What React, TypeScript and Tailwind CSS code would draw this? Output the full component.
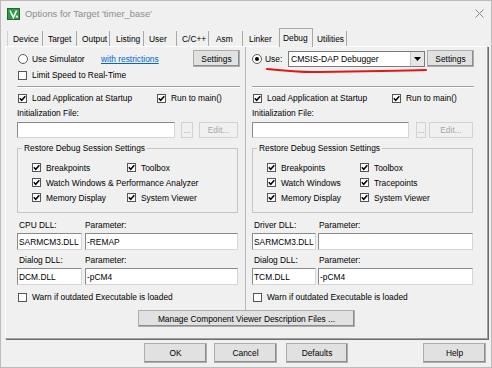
import clsx from "clsx";
import type { ReactNode } from "react";

const Check = ({ on = true }: { on?: boolean }) => (
  <span className="flex h-[9px] w-[9px] shrink-0 items-center justify-center border border-[#555] bg-white">
    {on && (
      <svg width="7" height="7" viewBox="0 0 7 7">
        <path d="M0.8 3.3 2.7 5.3 6.3 1.2" fill="none" stroke="#000" strokeWidth="1.5" />
      </svg>
    )}
  </span>
);

const Radio = ({ on = false }: { on?: boolean }) => (
  <span className="flex h-[10px] w-[10px] shrink-0 items-center justify-center rounded-full border border-[#5a5a5a] bg-white">
    {on && <span className="h-[4px] w-[4px] rounded-full bg-black" />}
  </span>
);

const CheckLabel = ({ label, on = true, className }: { label: string; on?: boolean; className?: string }) => (
  <div className={clsx("flex items-center gap-[5px] whitespace-nowrap", className)}>
    <Check on={on} />
    <span>{label}</span>
  </div>
);

const Btn = ({ children, className, disabled }: { children: ReactNode; className?: string; disabled?: boolean }) => (
  <div
    className={clsx(
      "flex shrink-0 items-center justify-center whitespace-nowrap border",
      disabled
        ? "border-[#d2d2d2] bg-[#f0f0f0] text-[#a6a6a6]"
        : "border-[#adadad] bg-[#e1e1e1] shadow-[inset_-1px_-1px_0_#8c8c8c]",
      className
    )}
  >
    {children}
  </div>
);

const Field = ({ value, className }: { value: string; className?: string }) => (
  <div
    className={clsx(
      "flex shrink-0 items-center overflow-hidden whitespace-nowrap border border-[#d6d6d6] border-t-[#8a8a8a] border-l-[#8a8a8a] bg-white px-[1px]",
      className
    )}
  >
    {value}
  </div>
);

type Side = {
  top: ReactNode;
  second: ReactNode;
  runW: string;
  initW: string;
  dots: string;
  edit: string;
  checks: string[][];
  firstCheckW: string;
  dll: string;
  dllLabelW: string;
  dllW: string;
  paramCls: string;
  dllVal: string;
  paramVal: string;
  dlgVal: string;
  dlgParam: string;
};

const Column = ({ s, className }: { s: Side; className: string }) => (
  <div className={clsx("flex flex-col pt-[3px]", className)}>
    <div className="flex h-[17px] items-center">{s.top}</div>
    <div className="flex h-[16px] items-center">{s.second}</div>
    <div className="mt-[3px] h-[2px] border-t border-b border-t-[#a0a0a0] border-b-white" />

    <div className="mt-[3px] flex h-[14px] items-center">
      <CheckLabel label="Load Application at Startup" className={clsx("ml-[1px]", s.runW)} />
      <CheckLabel label="Run to main()" />
    </div>
    <div className="mt-[1px] flex h-[14px] items-center">Initialization File:</div>
    <div className="mt-[2px] flex h-[16px] items-center">
      <Field value="" className={clsx("h-[16px]", s.initW)} />
      <Btn disabled className={clsx("h-[16px] border-[#bdbdbd] text-[#555]", s.dots)}>...</Btn>
      <Btn disabled className={clsx("h-[16px]", s.edit)}>Edit...</Btn>
    </div>

    <fieldset className="mt-[5px] h-[70px] w-[221px] border border-[#c6c6c6]">
      <legend className="ml-[4px] px-[2px] leading-[10px]">Restore Debug Session Settings</legend>
      <div className="flex flex-col pl-[14px] pt-[7px]">
        {s.checks.map((row) => (
          <div key={row[0]} className="flex h-[15px] items-center">
            <CheckLabel label={row[0]} className={row[1] ? s.firstCheckW : undefined} />
            {row[1] && <CheckLabel label={row[1]} />}
          </div>
        ))}
      </div>
    </fieldset>

    <div className="mt-[5px] flex h-[14px] items-center">
      <span className={clsx("ml-[2px]", s.dllLabelW)}>{s.dll}</span>
      <span>Parameter:</span>
    </div>
    <div className="mt-[1px] flex h-[17px]">
      <Field value={s.dllVal} className={s.dllW} />
      <Field value={s.paramVal} className={s.paramCls} />
    </div>
    <div className="mt-[3px] flex h-[14px] items-center">
      <span className={clsx("ml-[2px]", s.dllLabelW)}>Dialog DLL:</span>
      <span>Parameter:</span>
    </div>
    <div className="mt-[1px] flex h-[17px]">
      <Field value={s.dlgVal} className={s.dllW} />
      <Field value={s.dlgParam} className={s.paramCls} />
    </div>
    <div className="mt-[5px] flex h-[14px] items-center">
      <CheckLabel on={false} label="Warn if outdated Executable is loaded" className="ml-[1px]" />
    </div>
  </div>
);

const left: Side = {
  top: (
    <>
      <div className="ml-[1px] flex w-[83px] items-center gap-[4px] whitespace-nowrap">
        <Radio />
        <span>Use Simulator</span>
      </div>
      <span className="text-[#0066cc] underline">with restrictions</span>
      <Btn className="ml-auto h-[17px] w-[47px]">Settings</Btn>
    </>
  ),
  second: <CheckLabel on={false} label="Limit Speed to Real-Time" className="ml-[1px]" />,
  runW: "w-[139px]",
  initW: "w-[158px]",
  dots: "ml-[6px] w-[12px]",
  edit: "ml-[6px] w-[39px]",
  checks: [["Breakpoints", "Toolbox"], ["Watch Windows & Performance Analyzer"], ["Memory Display", "System Viewer"]],
  firstCheckW: "w-[95px]",
  dll: "CPU DLL:",
  dllLabelW: "w-[66px]",
  dllW: "w-[65px]",
  paramCls: "ml-[3px] w-[153px]",
  dllVal: "SARMCM3.DLL",
  paramVal: "-REMAP",
  dlgVal: "DCM.DLL",
  dlgParam: "-pCM4",
};

const right: Side = {
  top: (
    <>
      <div className="flex w-[36px] items-center gap-[3px]">
        <Radio on />
        <span>Use:</span>
      </div>
      <div className="flex h-[16px] w-[137px] items-center border border-[#7a7a7a] bg-white pl-[2px]">
        <span className="text-[8.6px]">CMSIS-DAP Debugger</span>
        <div className="ml-auto flex h-full w-[14px] items-center justify-center border-l border-[#c8c8c8] bg-[#e6e6e6]">
          <svg width="7" height="4" viewBox="0 0 7 4">
            <path d="M0 0h7L3.5 4z" fill="#000" />
          </svg>
        </div>
      </div>
      <Btn className="ml-[2px] h-[17px] w-[47px]">Settings</Btn>
    </>
  ),
  second: null,
  runW: "w-[139px]",
  initW: "w-[157px]",
  dots: "ml-[7px] w-[10px]",
  edit: "ml-[3px] w-[44px]",
  checks: [["Breakpoints", "Toolbox"], ["Watch Windows", "Tracepoints"], ["Memory Display", "System Viewer"]],
  firstCheckW: "w-[93px]",
  dll: "Driver DLL:",
  dllLabelW: "w-[65px]",
  dllW: "w-[64px]",
  paramCls: "ml-[2px] w-[155px]",
  dllVal: "SARMCM3.DLL",
  paramVal: "",
  dlgVal: "TCM.DLL",
  dlgParam: "-pCM4",
};

const tabs = [
  { label: "Device", w: "w-[36px] border-l border-l-[#d0d0d0]" },
  { label: "Target", w: "w-[34px]" },
  { label: "Output", w: "w-[33px]" },
  { label: "Listing", w: "w-[34px] pl-[6px]" },
  { label: "User", w: "w-[33px]" },
  { label: "C/C++", w: "w-[32px]" },
  { label: "Asm", w: "w-[34px] pl-[7px]" },
  { label: "Linker", w: "w-[36px] pl-[6px] border-r-0" },
];

const App = () => {
  return (
    <div className="relative flex h-[368px] w-[492px] flex-col overflow-hidden border border-[#bcbcbc] bg-[#f0f0f0] font-['Liberation_Sans',Arial,sans-serif] text-[8.4px] leading-[10px] text-black">
      {/* title bar */}
      <div className="flex h-[25px] items-center pl-[6px] pr-[7px]">
        <svg width="13" height="12" viewBox="0 0 13 12">
          <rect x="0.5" y="0.5" width="12" height="11" fill="#2f9a45" stroke="#1d6b2e" />
          <path d="M3 2.5 6.3 9.5 9.6 2.5" fill="none" stroke="#fff" strokeWidth="1.6" />
          <rect x="8.8" y="7.6" width="2" height="2" fill="#fff" />
        </svg>
        <span className="ml-[5px] text-[9.4px] text-[#8c8c8c]">Options for Target 'timer_base'</span>
        <svg className="ml-auto" width="9" height="9" viewBox="0 0 9 9">
          <path d="M0.5 0.5 8.5 8.5M8.5 0.5 0.5 8.5" stroke="#8a8a8a" strokeWidth="1" />
        </svg>
      </div>

      {/* tabs */}
      <div className="flex h-[20px] items-end pl-[6px]">
        {tabs.map((t) => (
          <div key={t.label} className={clsx("flex h-[15px] items-center border-r border-[#a8a8a8] pl-[5px] whitespace-nowrap", t.w)}>
            {t.label}
          </div>
        ))}
        <div className="relative top-[1px] z-10 flex h-[19px] w-[34px] items-center border border-b-0 border-[#a8a8a8] bg-[#f0f0f0] pl-[3px]">
          Debug
        </div>
        <div className="flex h-[15px] w-[34px] items-center border-r border-[#a8a8a8] pl-[4px]">Utilities</div>
      </div>

      {/* tab panel */}
      <div className="ml-[4px] flex h-[293px] w-[483px] flex-col border border-white border-r-[#a0a0a0] border-b-[#a0a0a0] shadow-[1px_1px_0_#6e6e6e]">
        <div className="flex">
          <Column s={left} className="w-[240px] border-r border-[#b8b8b8] pb-[6px] pl-[11px] pr-[5px]" />
          <Column s={right} className="w-[239px] pl-[6px] pr-[11px]" />
        </div>
        <Btn className="mx-auto h-[17px] w-[217px]">Manage Component Viewer Description Files ...</Btn>
      </div>

      {/* dialog buttons */}
      <div className="mt-[4px] flex h-[20px] pl-[143px] pr-[5px]">
        <Btn className="h-[20px] w-[63px]">OK</Btn>
        <Btn className="ml-[7px] h-[20px] w-[63px]">Cancel</Btn>
        <Btn className="ml-[9px] h-[20px] w-[62px]">Defaults</Btn>
        <Btn className="ml-auto h-[20px] w-[63px]">Help</Btn>
      </div>

      {/* hand-drawn annotation */}
      <svg className="pointer-events-none absolute left-0 top-0" width="492" height="368" viewBox="0 0 492 368">
        <path d="M266 68 C285 70 300 71.5 318 71 L380 70 Q410 69.5 425 69" fill="none" stroke="#e0171b" strokeWidth="2" strokeLinecap="round" />
      </svg>
    </div>
  );
};

export default App;
